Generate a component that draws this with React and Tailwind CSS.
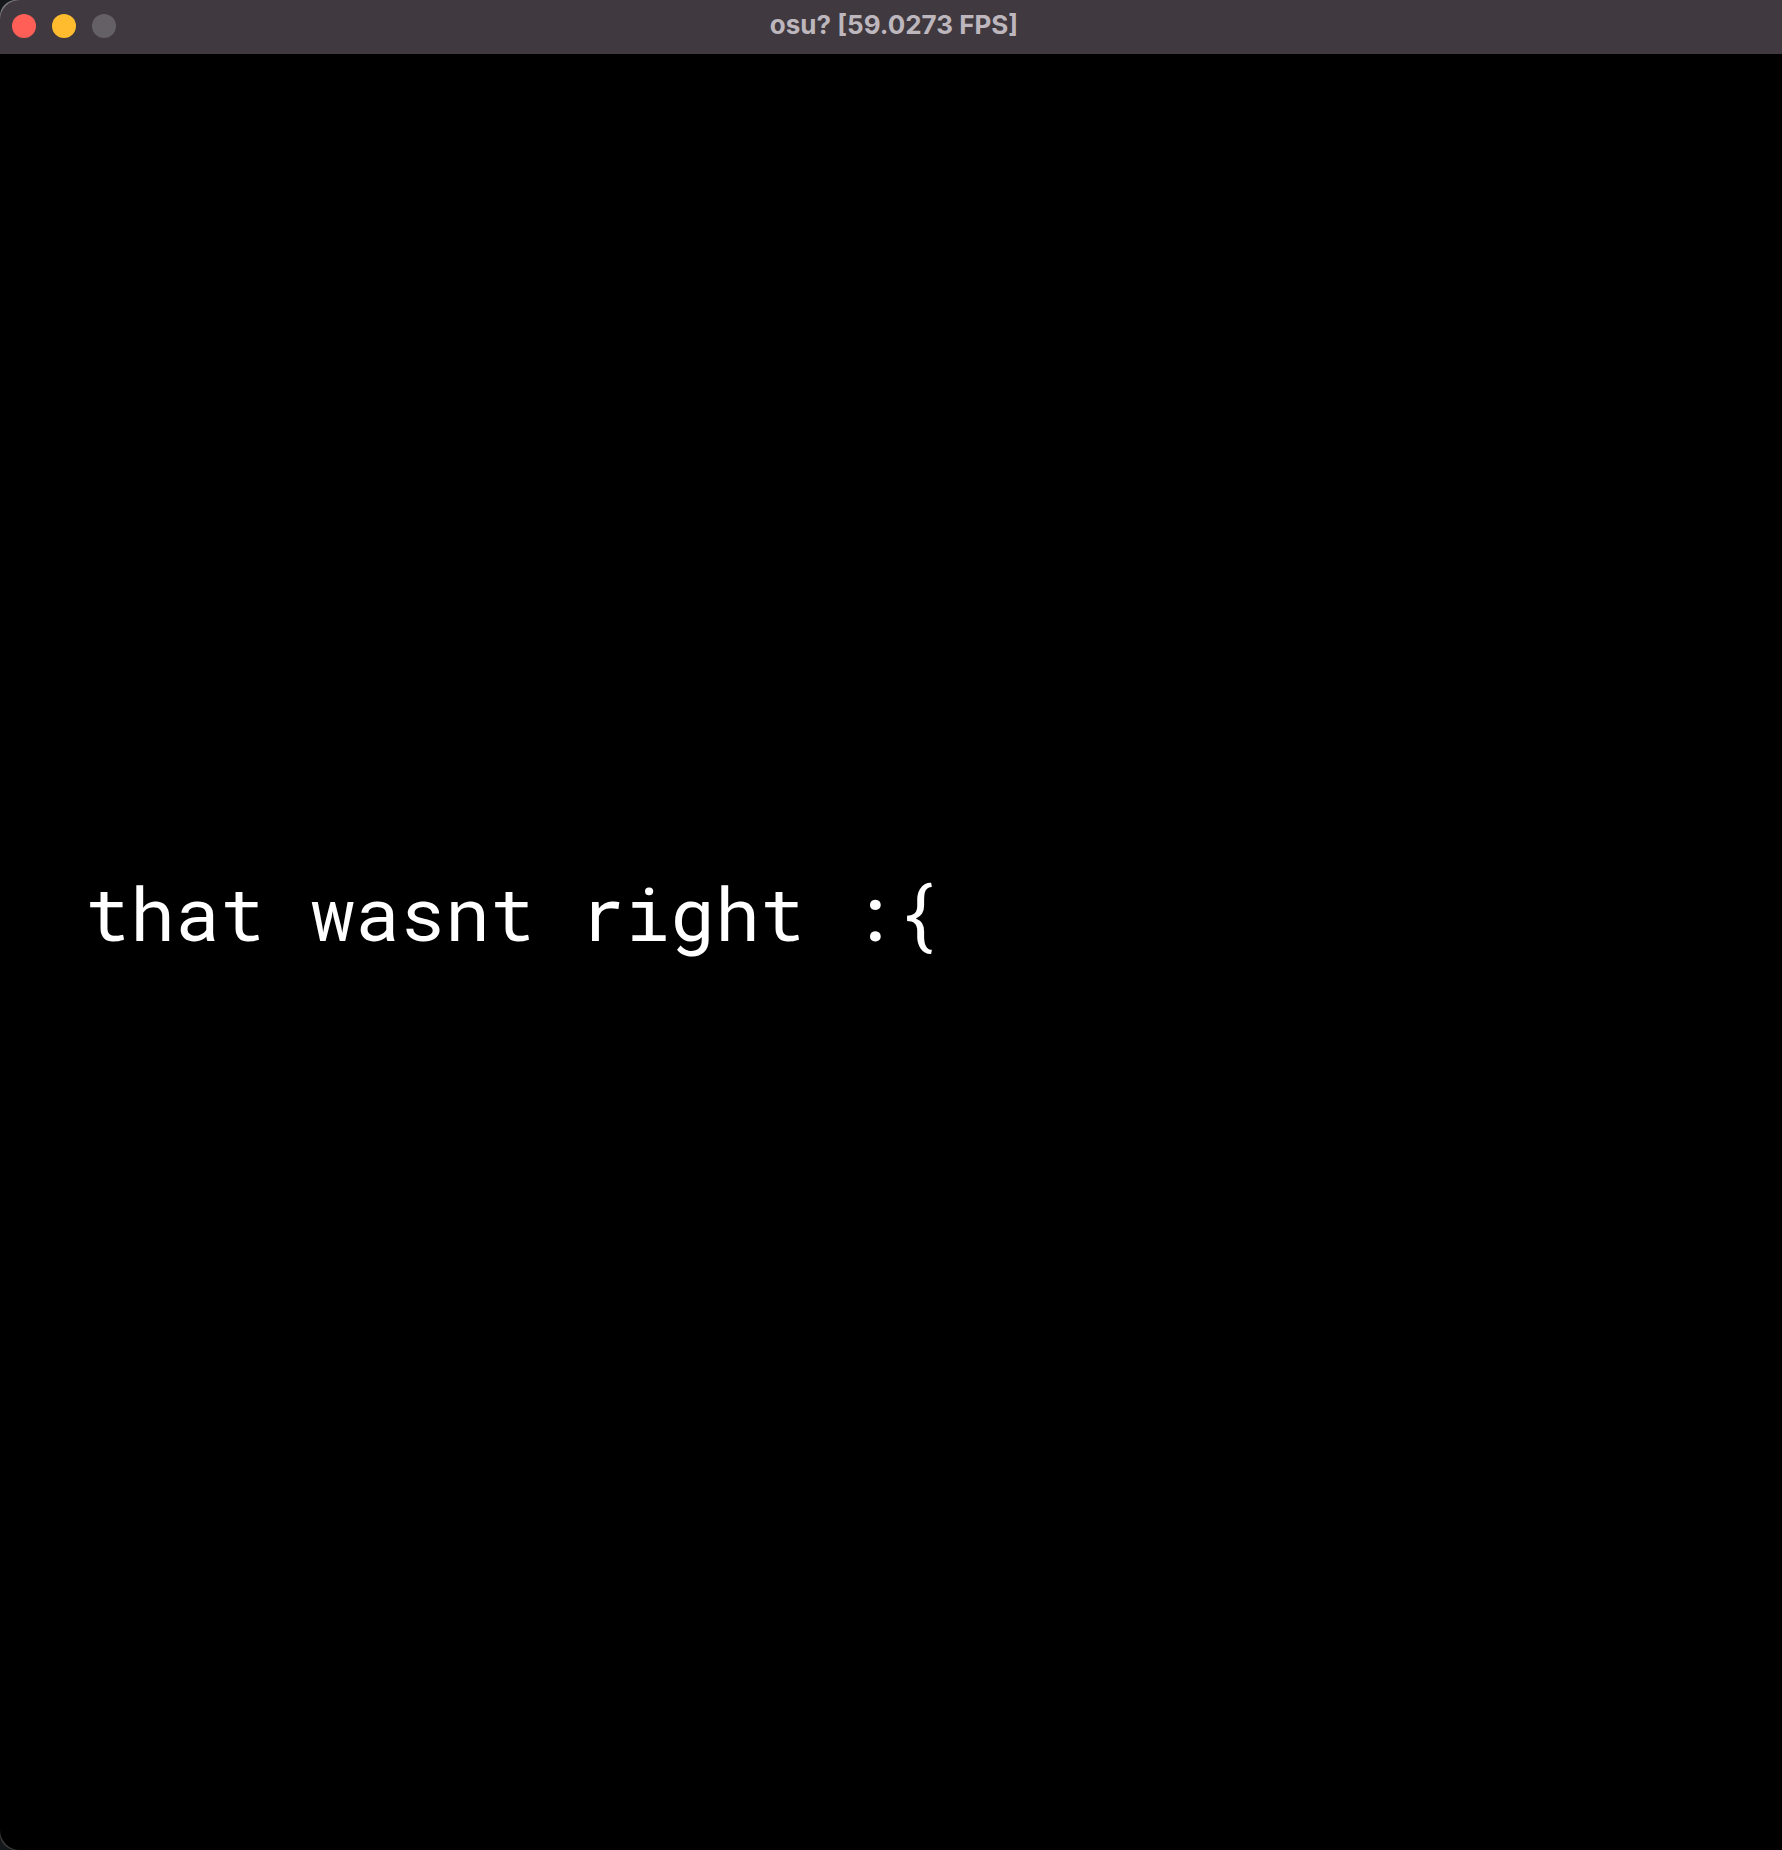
const controls = [
  { label: "Close", color: "bg-[#ff5f57]" },
  { label: "Minimize", color: "bg-[#febc2e]" },
  { label: "Zoom", color: "bg-[#656066]", disabled: true },
];

function TitleBar({ title }) {
  return (
    <header className="grid h-[54px] shrink-0 grid-cols-[1fr_auto_1fr] items-center rounded-tl-[20px] bg-[#403a40] px-3 pb-0.5">
      <div className="flex gap-4">
        {controls.map(({ label, color, disabled }) => (
          <button
            key={label}
            type="button"
            aria-label={label}
            disabled={disabled}
            className={`size-6 rounded-full ${color}`}
          />
        ))}
      </div>
      <h1 className="pb-0.5 pl-1.5 font-['Inter',sans-serif] text-[26px] leading-8 font-bold whitespace-nowrap text-[#bdb7bd]">
        {title}
      </h1>
    </header>
  );
}

export default function App() {
  return (
    <div className="flex min-h-screen flex-col bg-[#14181a]">
      {/* The slightly tighter radius leaves a thin highlight on the window corners. */}
      <div className="flex flex-1 flex-col rounded-l-2xl bg-linear-to-b from-[#7d7a7f] to-[#3a3a3a]">
        <TitleBar title="osu? [59.0273 FPS]" />
        <main className="flex flex-1 items-center rounded-bl-[20px] bg-black px-[85px] pb-20">
          <p className="font-['Roboto_Mono','DejaVu_Sans_Mono',monospace] text-[75px] leading-[88px] text-white">
            that wasnt right :{"{"}
          </p>
        </main>
      </div>
    </div>
  );
}
